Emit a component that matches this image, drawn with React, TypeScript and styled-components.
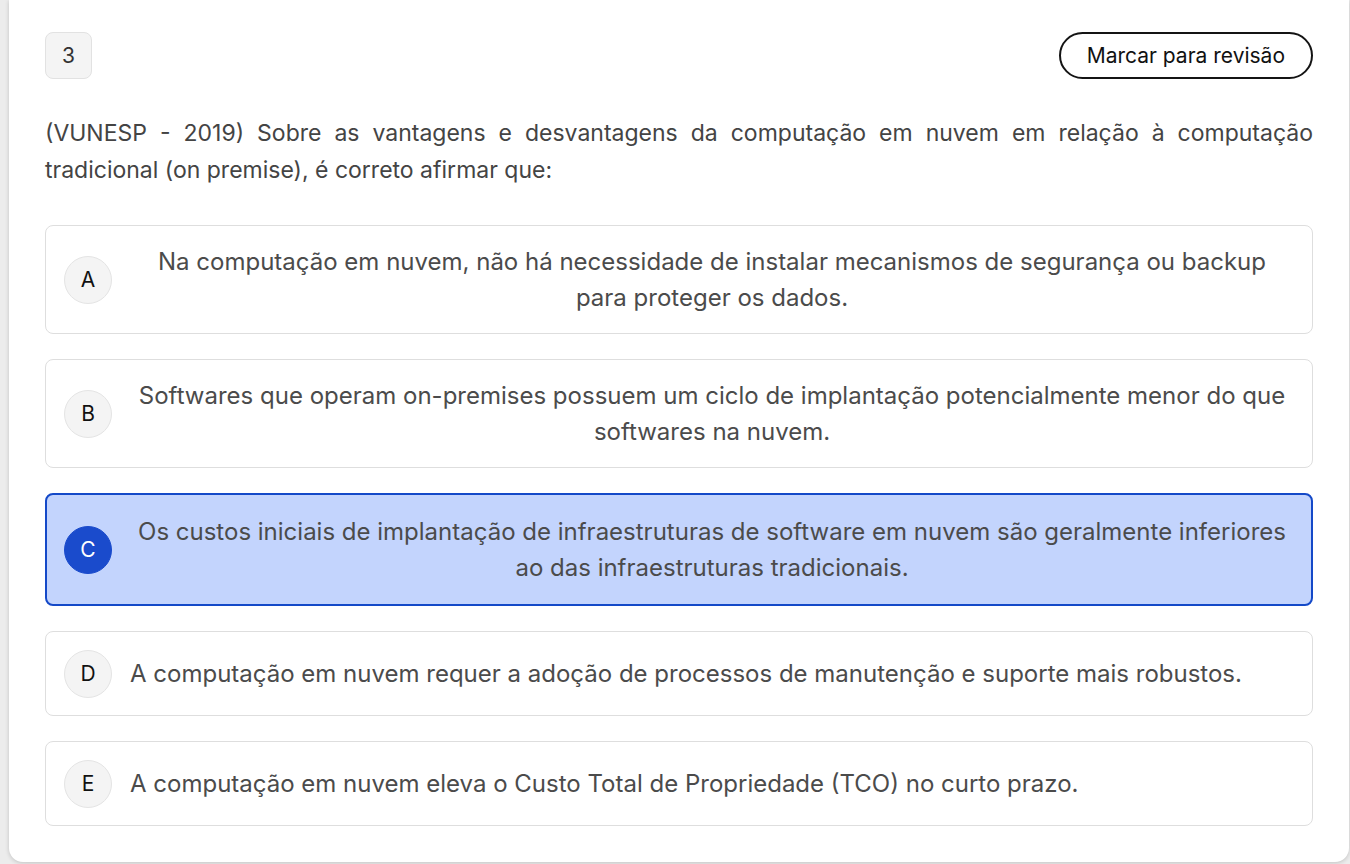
import { createGlobalStyle, styled } from "styled-components";

const Global = createGlobalStyle`
  html, body {
    margin: 0;
    padding: 0;
    background: #ececec;
    font-family: Inter, "Noto Sans", "Liberation Sans", sans-serif;
  }
`;

const Page = styled.div`
  padding: 0 1px 3px 9px;
`;

const Card = styled.div`
  background: #fff;
  border-radius: 0 0 14px 14px;
  box-shadow: 0 1px 4px rgba(0, 0, 0, 0.18);
  padding: 32px 36px 36px;
  display: flex;
  flex-direction: column;
`;

const Header = styled.div`
  display: flex;
  justify-content: space-between;
  align-items: center;
`;

const Number = styled.div`
  width: 45px;
  height: 45px;
  border: 1px solid #e2e2e2;
  border-radius: 8px;
  background: #f4f4f4;
  display: flex;
  align-items: center;
  justify-content: center;
  font-size: 21px;
  color: #333;
`;

const ReviewButton = styled.button`
  height: 47px;
  padding: 0 26px;
  border: 2px solid #141414;
  border-radius: 24px;
  background: #fff;
  font-family: inherit;
  font-size: 21px;
  color: #111;
  cursor: pointer;
`;

const Question = styled.p`
  margin: 36px 0;
  font-size: 23px;
  line-height: 37px;
  color: #444;
  text-align: justify;
`;

const Options = styled.div`
  display: flex;
  flex-direction: column;
  gap: 25px;
`;

const Option = styled.div<{ $selected?: boolean }>`
  display: flex;
  align-items: center;
  gap: 18px;
  padding: ${({ $selected }) => ($selected ? "18.5px 17px" : "17.5px 18px")};
  border: ${({ $selected }) => ($selected ? "2px solid #1449c8" : "1px solid #dedede")};
  border-radius: 8px;
  background: ${({ $selected }) => ($selected ? "#c3d4fd" : "#fff")};
`;

const Letter = styled.div<{ $selected?: boolean }>`
  flex: none;
  width: 46px;
  height: 46px;
  border-radius: 50%;
  border: 1px solid ${({ $selected }) => ($selected ? "#1a4bcc" : "#e4e4e4")};
  background: ${({ $selected }) => ($selected ? "#1a4bcc" : "#f4f4f4")};
  color: ${({ $selected }) => ($selected ? "#fff" : "#111")};
  display: flex;
  align-items: center;
  justify-content: center;
  font-size: 21px;
`;

const OptionText = styled.div`
  font-size: 24px;
  line-height: 36px;
  color: #4b4b4b;
  text-align: center;
`;

const answers = [
  { l: "A", t: "Na computação em nuvem, não há necessidade de instalar mecanismos de segurança ou backup para proteger os dados." },
  { l: "B", t: "Softwares que operam on-premises possuem um ciclo de implantação potencialmente menor do que softwares na nuvem." },
  { l: "C", t: "Os custos iniciais de implantação de infraestruturas de software em nuvem são geralmente inferiores ao das infraestruturas tradicionais." },
  { l: "D", t: "A computação em nuvem requer a adoção de processos de manutenção e suporte mais robustos." },
  { l: "E", t: "A computação em nuvem eleva o Custo Total de Propriedade (TCO) no curto prazo." },
];

const App = () => (
  <Page>
    <Global />
    <Card>
      <Header>
        <Number>3</Number>
        <ReviewButton>Marcar para revisão</ReviewButton>
      </Header>
      <Question>
        (VUNESP - 2019) Sobre as vantagens e desvantagens da computação em nuvem em relação à computação
        tradicional (on premise), é correto afirmar que:
      </Question>
      <Options>
        {answers.map((a) => (
          <Option key={a.l} $selected={a.l === "C"}>
            <Letter $selected={a.l === "C"}>{a.l}</Letter>
            <OptionText>{a.t}</OptionText>
          </Option>
        ))}
      </Options>
    </Card>
  </Page>
);

export default App;
